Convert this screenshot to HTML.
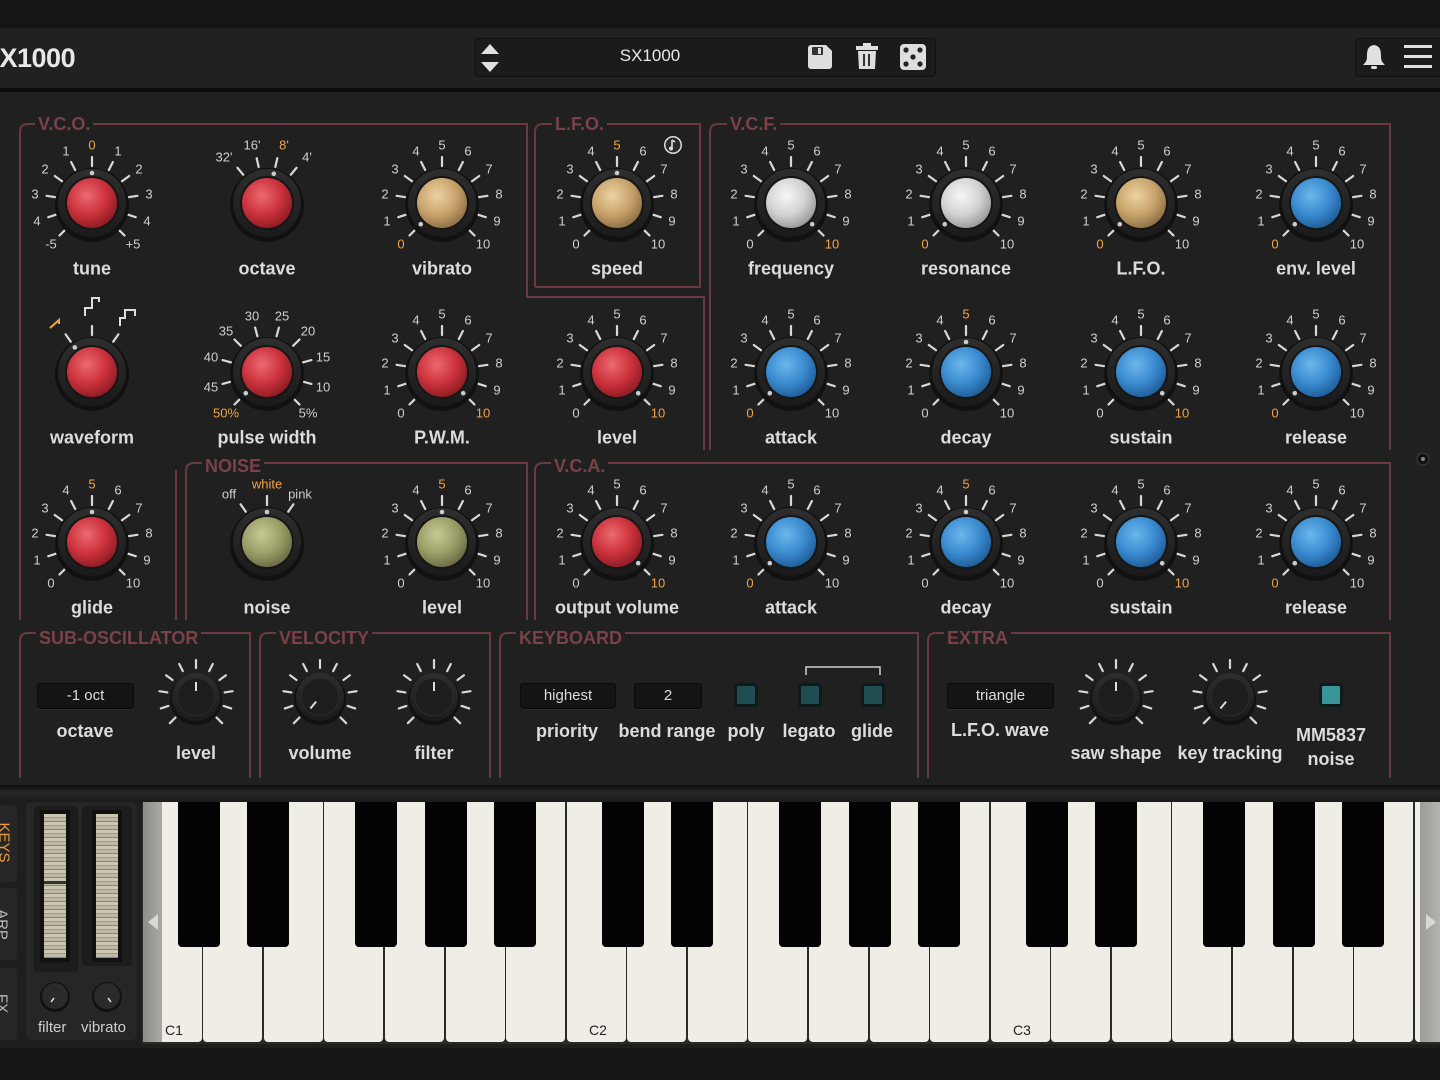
<!DOCTYPE html>
<html><head><meta charset="utf-8">
<style>
*{margin:0;padding:0;box-sizing:border-box}
body{width:1440px;height:1080px;overflow:hidden;background:#151515;font-family:"Liberation Sans",sans-serif;position:relative}
.abs{position:absolute}
#hdr{left:0;top:28px;width:1440px;height:60px;background:#212121}
#panel{left:0;top:92px;width:1440px;height:693px;background:#202020}
.k{position:absolute;width:0;height:0}
.ks{position:absolute;left:-60px;top:-60px;width:120px;height:120px;overflow:visible}
.k b{position:absolute;transform:translate(-50%,-50%);font-size:13px;font-weight:normal;color:#cfcfcf;white-space:nowrap;line-height:1}
.k b.o{color:#f0a548}
.k i{position:absolute;top:66px;left:0;transform:translate(-50%,-50%);font-style:normal;font-weight:bold;font-size:18px;color:#dcdcdc;white-space:nowrap}
.n0{left:-41px;top:41px}.n1{left:-55px;top:18px}.n2{left:-57px;top:-9px}.n3{left:-47px;top:-34px}.n4{left:-26px;top:-52px}.n5{left:0;top:-58px}
.n6{left:26px;top:-52px}.n7{left:47px;top:-34px}.n8{left:57px;top:-9px}.n9{left:55px;top:18px}.n10{left:41px;top:41px}
.p0{left:-41px;top:41px}.p1{left:-56px;top:15px}.p2{left:-56px;top:-15px}.p3{left:-41px;top:-41px}.p4{left:-15px;top:-56px}
.p5{left:15px;top:-56px}.p6{left:41px;top:-41px}.p7{left:56px;top:-15px}.p8{left:56px;top:15px}.p9{left:41px;top:41px}
.title{position:absolute;font-weight:bold;font-size:18px;color:#79414a;background:#202020;padding:0 3px;line-height:20px;letter-spacing:0}
.lbl{position:absolute;transform:translateX(-50%);font-weight:bold;font-size:18px;color:#dcdcdc;white-space:nowrap}
.disp{position:absolute;height:26px;background:#141414;border:1px solid #0a0a0a;border-radius:3px;color:#dcdcdc;font-size:15px;text-align:center;line-height:24px;box-shadow:0 1px 0 #2c2c2c}
.tog{position:absolute;width:24px;height:24px;background:#0f1a1b;border-radius:3px}
.tog::after{content:"";position:absolute;left:3px;top:3px;width:18px;height:18px;background:#1f4d51;border-radius:1px}
.tog.on::after{background:#3a9599}
.wk{position:absolute;top:802px;height:240px;width:58.6px;background:#efede5;border-radius:0 0 4px 4px}
.bk{position:absolute;top:802px;height:145px;width:42px;background:#030303;border-radius:0 0 4px 4px}
.kl{position:absolute;top:1022px;font-size:14px;color:#222}
</style></head><body>
<svg width="0" height="0" style="position:absolute">
<defs>
<radialGradient id="gR" cx="40%" cy="35%" r="70%"><stop offset="0" stop-color="#ec6a70"/><stop offset=".55" stop-color="#cc323c"/><stop offset="1" stop-color="#8a1a22"/></radialGradient>
<radialGradient id="gT" cx="40%" cy="35%" r="70%"><stop offset="0" stop-color="#ecd2a2"/><stop offset=".55" stop-color="#c9a46c"/><stop offset="1" stop-color="#8a6c42"/></radialGradient>
<radialGradient id="gW" cx="40%" cy="35%" r="70%"><stop offset="0" stop-color="#f6f6f6"/><stop offset=".55" stop-color="#d3d3d3"/><stop offset="1" stop-color="#959595"/></radialGradient>
<radialGradient id="gB" cx="40%" cy="35%" r="70%"><stop offset="0" stop-color="#6cb6ec"/><stop offset=".55" stop-color="#3a8bd0"/><stop offset="1" stop-color="#1d5a94"/></radialGradient>
<radialGradient id="gO" cx="40%" cy="35%" r="70%"><stop offset="0" stop-color="#c8ca96"/><stop offset=".55" stop-color="#9c9e68"/><stop offset="1" stop-color="#666840"/></radialGradient>
<linearGradient id="ring" x1="0" y1="0" x2="0" y2="1"><stop offset="0" stop-color="#2e2e2e"/><stop offset="1" stop-color="#1a1a1a"/></linearGradient>
<line id="tk" x1="0" y1="-37" x2="0" y2="-46" stroke="#d8d8d8" stroke-width="2.2" stroke-linecap="round"/>
<g id="t11"><use href="#tk" transform="rotate(-135)"/><use href="#tk" transform="rotate(-108)"/><use href="#tk" transform="rotate(-81)"/><use href="#tk" transform="rotate(-54)"/><use href="#tk" transform="rotate(-27)"/><use href="#tk"/><use href="#tk" transform="rotate(27)"/><use href="#tk" transform="rotate(54)"/><use href="#tk" transform="rotate(81)"/><use href="#tk" transform="rotate(108)"/><use href="#tk" transform="rotate(135)"/></g>
<g id="t10"><use href="#tk" transform="rotate(-135)"/><use href="#tk" transform="rotate(-105)"/><use href="#tk" transform="rotate(-75)"/><use href="#tk" transform="rotate(-45)"/><use href="#tk" transform="rotate(-15)"/><use href="#tk" transform="rotate(15)"/><use href="#tk" transform="rotate(45)"/><use href="#tk" transform="rotate(75)"/><use href="#tk" transform="rotate(105)"/><use href="#tk" transform="rotate(135)"/></g>
<g id="t3"><use href="#tk" transform="rotate(-35)"/><use href="#tk"/><use href="#tk" transform="rotate(35)"/></g>
<g id="t4"><use href="#tk" transform="rotate(-40)"/><use href="#tk" transform="rotate(-13)"/><use href="#tk" transform="rotate(13)"/><use href="#tk" transform="rotate(40)"/></g>
<g id="kb"><circle r="37" cy="2" fill="#111"/><circle r="34" fill="url(#ring)"/><circle r="27" fill="#161616"/></g>
<g id="kR"><use href="#kb"/><circle r="25" fill="url(#gR)"/></g>
<g id="kT"><use href="#kb"/><circle r="25" fill="url(#gT)"/></g>
<g id="kW"><use href="#kb"/><circle r="25" fill="url(#gW)"/></g>
<g id="kB"><use href="#kb"/><circle r="25" fill="url(#gB)"/></g>
<g id="kO"><use href="#kb"/><circle r="25" fill="url(#gO)"/></g>
<line id="st" x1="0" y1="-29" x2="0" y2="-37" stroke="#d8d8d8" stroke-width="2.2" stroke-linecap="round"/>
<g id="sk"><use href="#st" transform="rotate(-135)"/><use href="#st" transform="rotate(-108)"/><use href="#st" transform="rotate(-81)"/><use href="#st" transform="rotate(-54)"/><use href="#st" transform="rotate(-27)"/><use href="#st"/><use href="#st" transform="rotate(27)"/><use href="#st" transform="rotate(54)"/><use href="#st" transform="rotate(81)"/><use href="#st" transform="rotate(108)"/><use href="#st" transform="rotate(135)"/>
<circle r="26" cy="2" fill="#111"/><circle r="24" fill="url(#ring)"/><circle r="19" fill="#1e1e1e" stroke="#2c2c2c"/></g>
</defs></svg>

<div id="hdr" class="abs"></div>
<div class="abs" style="left:0;top:88px;width:1440px;height:4px;background:#0b0b0b"></div>
<div id="panel" class="abs"></div>

<div class="abs" style="left:-18px;top:43px;font-weight:bold;font-size:27px;color:#e8e8e8;letter-spacing:-0.5px">SX1000</div>
<div class="abs" style="left:474px;top:38px;width:462px;height:39px;background:#1b1b1b;border:1px solid #101010;border-radius:4px"></div>
<svg class="abs" style="left:478px;top:40px" width="24" height="36"><path d="M3,14 L12,4 L21,14Z M3,22 L21,22 L12,32Z" fill="#e0e0e0"/></svg>
<div class="abs" style="left:600px;top:46px;width:100px;text-align:center;color:#e8e8e8;font-size:17px">SX1000</div>
<svg class="abs" style="left:806px;top:43px" width="28" height="28"><rect x="2" y="2" width="24" height="24" rx="3" fill="#dedede"/><path d="M20,2 L26,8 L26,2Z" fill="#1b1b1b"/><rect x="6" y="4" width="11" height="8" rx="1" fill="#333"/><rect x="12" y="5" width="3" height="6" fill="#ddd"/></svg>
<svg class="abs" style="left:854px;top:43px" width="26" height="28"><rect x="2" y="3" width="22" height="4" fill="#dedede"/><rect x="9" y="0" width="8" height="4" fill="#dedede"/><path d="M4,8 H22 L21,26 H5Z" fill="#dedede"/><rect x="9" y="11" width="2" height="12" fill="#333"/><rect x="14" y="11" width="2" height="12" fill="#333"/></svg>
<svg class="abs" style="left:899px;top:43px" width="28" height="28"><rect x="1" y="1" width="26" height="26" rx="4" fill="#dedede"/><circle cx="7" cy="7" r="2.6" fill="#222"/><circle cx="21" cy="7" r="2.6" fill="#222"/><circle cx="14" cy="14" r="2.6" fill="#222"/><circle cx="7" cy="21" r="2.6" fill="#222"/><circle cx="21" cy="21" r="2.6" fill="#222"/></svg>
<div class="abs" style="left:1355px;top:38px;width:100px;height:39px;background:#1b1b1b;border:1px solid #101010;border-radius:4px"></div>
<svg class="abs" style="left:1361px;top:43px" width="26" height="28"><path d="M13,2 C6,3 6,9 6,14 C6,18 4,20 2,22 H24 C22,20 20,18 20,14 C20,9 20,3 13,2Z" fill="#e0e0e0"/><rect x="10" y="23" width="6" height="3" rx="1.5" fill="#e0e0e0"/></svg>
<svg class="abs" style="left:1403px;top:44px" width="30" height="26"><rect x="1" y="1" width="28" height="3" fill="#e0e0e0"/><rect x="1" y="11" width="28" height="3" fill="#e0e0e0"/><rect x="1" y="21" width="28" height="3" fill="#e0e0e0"/></svg>

<svg class="abs" style="left:0;top:0" width="1440" height="1080" fill="none" stroke="#6a3a40" stroke-width="2">
<path d="M20,620 V132 Q20,124 28,124 H527 V297 H704 V450"/>
<path d="M527,620 V463 H194 Q186,463 186,471 V620"/>
<path d="M176,470 V620"/>
<path d="M535,287 V132 Q535,124 543,124 H700 V287 H535"/>
<path d="M710,450 V132 Q710,124 718,124 H1390 V450"/>
<path d="M535,620 V471 Q535,463 543,463 H1390 V620"/>
<path d="M20,778 V641 Q20,633 28,633 H250 V778"/>
<path d="M260,778 V641 Q260,633 268,633 H490 V778"/>
<path d="M500,778 V641 Q500,633 508,633 H918 V778"/>
<path d="M928,778 V641 Q928,633 936,633 H1390 V778"/>
<path d="M806,675 V667 H880 V675" stroke="#cfcfcf" stroke-width="1.5"/>
</svg>
<div class="title" style="left:35px;top:114px">V.C.O.</div>
<div class="title" style="left:552px;top:114px">L.F.O.</div>
<div class="title" style="left:727px;top:114px">V.C.F.</div>
<div class="title" style="left:202px;top:456px">NOISE</div>
<div class="title" style="left:551px;top:456px">V.C.A.</div>
<div class="title" style="left:36px;top:628px">SUB-OSCILLATOR</div>
<div class="title" style="left:276px;top:628px">VELOCITY</div>
<div class="title" style="left:516px;top:628px">KEYBOARD</div>
<div class="title" style="left:944px;top:628px">EXTRA</div>
<svg class="abs" style="left:1416px;top:452px" width="14" height="14"><circle cx="7" cy="7" r="6" fill="#111" stroke="#444"/><circle cx="7" cy="7" r="2" fill="#888"/></svg>
<svg class="abs" style="left:663px;top:135px" width="20" height="20"><circle cx="10" cy="10" r="9" fill="#ddd"/><circle cx="10" cy="10" r="7.5" fill="#2a2a2a"/><path d="M9,5 V13" stroke="#ddd" stroke-width="1.6"/><circle cx="8" cy="13.5" r="2" fill="#ddd"/><path d="M9,5 L12,7" stroke="#ddd" stroke-width="1.6"/></svg>

<div class="k" style="left:92px;top:203px"><svg class="ks" viewBox="-60 -60 120 120"><use href="#t11"/><use href="#kR"/><circle cx="0" cy="-30" r="2.3" fill="#ccc"/></svg><b class="n0">-5</b><b class="n1">4</b><b class="n2">3</b><b class="n3">2</b><b class="n4">1</b><b class="n5 o">0</b><b class="n6">1</b><b class="n7">2</b><b class="n8">3</b><b class="n9">4</b><b class="n10">+5</b><i>tune</i></div>
<div class="k" style="left:267px;top:203px"><svg class="ks" viewBox="-60 -60 120 120"><use href="#t4"/><use href="#kR"/><circle cx="0" cy="-30" r="2.3" fill="#ccc" transform="rotate(13)"/></svg><b style="left:-43px;top:-46px">32'</b><b style="left:-15px;top:-58px">16'</b><b class="o" style="left:17px;top:-58px">8'</b><b style="left:40px;top:-46px">4'</b><i>octave</i></div>
<div class="k" style="left:442px;top:203px"><svg class="ks" viewBox="-60 -60 120 120"><use href="#t11"/><use href="#kT"/><circle cx="0" cy="-30" r="2.3" fill="#ccc" transform="rotate(-135)"/></svg><b class="n0 o">0</b><b class="n1">1</b><b class="n2">2</b><b class="n3">3</b><b class="n4">4</b><b class="n5">5</b><b class="n6">6</b><b class="n7">7</b><b class="n8">8</b><b class="n9">9</b><b class="n10">10</b><i>vibrato</i></div>
<div class="k" style="left:617px;top:203px"><svg class="ks" viewBox="-60 -60 120 120"><use href="#t11"/><use href="#kT"/><circle cx="0" cy="-30" r="2.3" fill="#ccc"/></svg><b class="n0">0</b><b class="n1">1</b><b class="n2">2</b><b class="n3">3</b><b class="n4">4</b><b class="n5 o">5</b><b class="n6">6</b><b class="n7">7</b><b class="n8">8</b><b class="n9">9</b><b class="n10">10</b><i>speed</i></div>
<div class="k" style="left:791px;top:203px"><svg class="ks" viewBox="-60 -60 120 120"><use href="#t11"/><use href="#kW"/><circle cx="0" cy="-30" r="2.3" fill="#ccc" transform="rotate(135)"/></svg><b class="n0">0</b><b class="n1">1</b><b class="n2">2</b><b class="n3">3</b><b class="n4">4</b><b class="n5">5</b><b class="n6">6</b><b class="n7">7</b><b class="n8">8</b><b class="n9">9</b><b class="n10 o">10</b><i>frequency</i></div>
<div class="k" style="left:966px;top:203px"><svg class="ks" viewBox="-60 -60 120 120"><use href="#t11"/><use href="#kW"/><circle cx="0" cy="-30" r="2.3" fill="#ccc" transform="rotate(-135)"/></svg><b class="n0 o">0</b><b class="n1">1</b><b class="n2">2</b><b class="n3">3</b><b class="n4">4</b><b class="n5">5</b><b class="n6">6</b><b class="n7">7</b><b class="n8">8</b><b class="n9">9</b><b class="n10">10</b><i>resonance</i></div>
<div class="k" style="left:1141px;top:203px"><svg class="ks" viewBox="-60 -60 120 120"><use href="#t11"/><use href="#kT"/><circle cx="0" cy="-30" r="2.3" fill="#ccc" transform="rotate(-135)"/></svg><b class="n0 o">0</b><b class="n1">1</b><b class="n2">2</b><b class="n3">3</b><b class="n4">4</b><b class="n5">5</b><b class="n6">6</b><b class="n7">7</b><b class="n8">8</b><b class="n9">9</b><b class="n10">10</b><i>L.F.O.</i></div>
<div class="k" style="left:1316px;top:203px"><svg class="ks" viewBox="-60 -60 120 120"><use href="#t11"/><use href="#kB"/><circle cx="0" cy="-30" r="2.3" fill="#ccc" transform="rotate(-135)"/></svg><b class="n0 o">0</b><b class="n1">1</b><b class="n2">2</b><b class="n3">3</b><b class="n4">4</b><b class="n5">5</b><b class="n6">6</b><b class="n7">7</b><b class="n8">8</b><b class="n9">9</b><b class="n10">10</b><i>env. level</i></div>

<div class="k" style="left:92px;top:372px"><svg class="ks" viewBox="-60 -60 120 120"><use href="#t3"/><use href="#kR"/><circle cx="0" cy="-30" r="2.3" fill="#ccc" transform="rotate(-35)"/>
<path d="M-44,-44 L-35,-52 V-48" stroke="#f0a548" stroke-width="2" fill="none" transform="translate(2,0)"/>
<path d="M-7,-56 V-64 H0 V-74 H7 V-70" stroke="#ddd" stroke-width="2" fill="none"/>
<path d="M28,-46 V-54 H33 V-62 H43 V-56" stroke="#ddd" stroke-width="2" fill="none"/></svg><i>waveform</i></div>
<div class="k" style="left:267px;top:372px"><svg class="ks" viewBox="-60 -60 120 120"><use href="#t10"/><use href="#kR"/><circle cx="0" cy="-30" r="2.3" fill="#ccc" transform="rotate(-135)"/></svg><b class="p0 o">50%</b><b class="p1">45</b><b class="p2">40</b><b class="p3">35</b><b class="p4">30</b><b class="p5">25</b><b class="p6">20</b><b class="p7">15</b><b class="p8">10</b><b class="p9">5%</b><i>pulse width</i></div>
<div class="k" style="left:442px;top:372px"><svg class="ks" viewBox="-60 -60 120 120"><use href="#t11"/><use href="#kR"/><circle cx="0" cy="-30" r="2.3" fill="#ccc" transform="rotate(135)"/></svg><b class="n0">0</b><b class="n1">1</b><b class="n2">2</b><b class="n3">3</b><b class="n4">4</b><b class="n5">5</b><b class="n6">6</b><b class="n7">7</b><b class="n8">8</b><b class="n9">9</b><b class="n10 o">10</b><i>P.W.M.</i></div>
<div class="k" style="left:617px;top:372px"><svg class="ks" viewBox="-60 -60 120 120"><use href="#t11"/><use href="#kR"/><circle cx="0" cy="-30" r="2.3" fill="#ccc" transform="rotate(135)"/></svg><b class="n0">0</b><b class="n1">1</b><b class="n2">2</b><b class="n3">3</b><b class="n4">4</b><b class="n5">5</b><b class="n6">6</b><b class="n7">7</b><b class="n8">8</b><b class="n9">9</b><b class="n10 o">10</b><i>level</i></div>
<div class="k" style="left:791px;top:372px"><svg class="ks" viewBox="-60 -60 120 120"><use href="#t11"/><use href="#kB"/><circle cx="0" cy="-30" r="2.3" fill="#ccc" transform="rotate(-135)"/></svg><b class="n0 o">0</b><b class="n1">1</b><b class="n2">2</b><b class="n3">3</b><b class="n4">4</b><b class="n5">5</b><b class="n6">6</b><b class="n7">7</b><b class="n8">8</b><b class="n9">9</b><b class="n10">10</b><i>attack</i></div>
<div class="k" style="left:966px;top:372px"><svg class="ks" viewBox="-60 -60 120 120"><use href="#t11"/><use href="#kB"/><circle cx="0" cy="-30" r="2.3" fill="#ccc"/></svg><b class="n0">0</b><b class="n1">1</b><b class="n2">2</b><b class="n3">3</b><b class="n4">4</b><b class="n5 o">5</b><b class="n6">6</b><b class="n7">7</b><b class="n8">8</b><b class="n9">9</b><b class="n10">10</b><i>decay</i></div>
<div class="k" style="left:1141px;top:372px"><svg class="ks" viewBox="-60 -60 120 120"><use href="#t11"/><use href="#kB"/><circle cx="0" cy="-30" r="2.3" fill="#ccc" transform="rotate(135)"/></svg><b class="n0">0</b><b class="n1">1</b><b class="n2">2</b><b class="n3">3</b><b class="n4">4</b><b class="n5">5</b><b class="n6">6</b><b class="n7">7</b><b class="n8">8</b><b class="n9">9</b><b class="n10 o">10</b><i>sustain</i></div>
<div class="k" style="left:1316px;top:372px"><svg class="ks" viewBox="-60 -60 120 120"><use href="#t11"/><use href="#kB"/><circle cx="0" cy="-30" r="2.3" fill="#ccc" transform="rotate(-135)"/></svg><b class="n0 o">0</b><b class="n1">1</b><b class="n2">2</b><b class="n3">3</b><b class="n4">4</b><b class="n5">5</b><b class="n6">6</b><b class="n7">7</b><b class="n8">8</b><b class="n9">9</b><b class="n10">10</b><i>release</i></div>

<div class="k" style="left:92px;top:542px"><svg class="ks" viewBox="-60 -60 120 120"><use href="#t11"/><use href="#kR"/><circle cx="0" cy="-30" r="2.3" fill="#ccc"/></svg><b class="n0">0</b><b class="n1">1</b><b class="n2">2</b><b class="n3">3</b><b class="n4">4</b><b class="n5 o">5</b><b class="n6">6</b><b class="n7">7</b><b class="n8">8</b><b class="n9">9</b><b class="n10">10</b><i>glide</i></div>
<div class="k" style="left:267px;top:542px"><svg class="ks" viewBox="-60 -60 120 120"><use href="#t3"/><use href="#kO"/><circle cx="0" cy="-30" r="2.3" fill="#ccc"/></svg><b style="left:-38px;top:-48px">off</b><b class="o" style="left:0;top:-58px">white</b><b style="left:33px;top:-48px">pink</b><i>noise</i></div>
<div class="k" style="left:442px;top:542px"><svg class="ks" viewBox="-60 -60 120 120"><use href="#t11"/><use href="#kO"/><circle cx="0" cy="-30" r="2.3" fill="#ccc"/></svg><b class="n0">0</b><b class="n1">1</b><b class="n2">2</b><b class="n3">3</b><b class="n4">4</b><b class="n5 o">5</b><b class="n6">6</b><b class="n7">7</b><b class="n8">8</b><b class="n9">9</b><b class="n10">10</b><i>level</i></div>
<div class="k" style="left:617px;top:542px"><svg class="ks" viewBox="-60 -60 120 120"><use href="#t11"/><use href="#kR"/><circle cx="0" cy="-30" r="2.3" fill="#ccc" transform="rotate(135)"/></svg><b class="n0">0</b><b class="n1">1</b><b class="n2">2</b><b class="n3">3</b><b class="n4">4</b><b class="n5">5</b><b class="n6">6</b><b class="n7">7</b><b class="n8">8</b><b class="n9">9</b><b class="n10 o">10</b><i>output volume</i></div>
<div class="k" style="left:791px;top:542px"><svg class="ks" viewBox="-60 -60 120 120"><use href="#t11"/><use href="#kB"/><circle cx="0" cy="-30" r="2.3" fill="#ccc" transform="rotate(-135)"/></svg><b class="n0 o">0</b><b class="n1">1</b><b class="n2">2</b><b class="n3">3</b><b class="n4">4</b><b class="n5">5</b><b class="n6">6</b><b class="n7">7</b><b class="n8">8</b><b class="n9">9</b><b class="n10">10</b><i>attack</i></div>
<div class="k" style="left:966px;top:542px"><svg class="ks" viewBox="-60 -60 120 120"><use href="#t11"/><use href="#kB"/><circle cx="0" cy="-30" r="2.3" fill="#ccc"/></svg><b class="n0">0</b><b class="n1">1</b><b class="n2">2</b><b class="n3">3</b><b class="n4">4</b><b class="n5 o">5</b><b class="n6">6</b><b class="n7">7</b><b class="n8">8</b><b class="n9">9</b><b class="n10">10</b><i>decay</i></div>
<div class="k" style="left:1141px;top:542px"><svg class="ks" viewBox="-60 -60 120 120"><use href="#t11"/><use href="#kB"/><circle cx="0" cy="-30" r="2.3" fill="#ccc" transform="rotate(135)"/></svg><b class="n0">0</b><b class="n1">1</b><b class="n2">2</b><b class="n3">3</b><b class="n4">4</b><b class="n5">5</b><b class="n6">6</b><b class="n7">7</b><b class="n8">8</b><b class="n9">9</b><b class="n10 o">10</b><i>sustain</i></div>
<div class="k" style="left:1316px;top:542px"><svg class="ks" viewBox="-60 -60 120 120"><use href="#t11"/><use href="#kB"/><circle cx="0" cy="-30" r="2.3" fill="#ccc" transform="rotate(-135)"/></svg><b class="n0 o">0</b><b class="n1">1</b><b class="n2">2</b><b class="n3">3</b><b class="n4">4</b><b class="n5">5</b><b class="n6">6</b><b class="n7">7</b><b class="n8">8</b><b class="n9">9</b><b class="n10">10</b><i>release</i></div>

<div class="disp" style="left:37px;top:683px;width:97px">-1 oct</div>
<div class="lbl" style="left:85px;top:721px">octave</div>
<svg class="abs" style="left:0;top:0;overflow:visible" width="1440" height="1080">
<g transform="translate(196,697)"><use href="#sk"/><line x1="0" y1="-6" x2="0" y2="-15" stroke="#ddd" stroke-width="2"/></g>
<g transform="translate(320,697)"><use href="#sk"/><line x1="0" y1="-6" x2="0" y2="-15" stroke="#ddd" stroke-width="2" transform="rotate(-140)"/></g>
<g transform="translate(434,697)"><use href="#sk"/><line x1="0" y1="-6" x2="0" y2="-15" stroke="#ddd" stroke-width="2"/></g>
<g transform="translate(1116,697)"><use href="#sk"/><line x1="0" y1="-6" x2="0" y2="-15" stroke="#ddd" stroke-width="2"/></g>
<g transform="translate(1230,697)"><use href="#sk"/><line x1="0" y1="-6" x2="0" y2="-15" stroke="#ddd" stroke-width="2" transform="rotate(-140)"/></g>
</svg>
<div class="lbl" style="left:196px;top:743px">level</div>
<div class="lbl" style="left:320px;top:743px">volume</div>
<div class="lbl" style="left:434px;top:743px">filter</div>
<div class="disp" style="left:520px;top:683px;width:96px">highest</div>
<div class="disp" style="left:634px;top:683px;width:68px">2</div>
<div class="tog" style="left:734px;top:683px"></div>
<div class="tog" style="left:798px;top:683px"></div>
<div class="tog" style="left:861px;top:683px"></div>
<div class="lbl" style="left:567px;top:721px">priority</div>
<div class="lbl" style="left:667px;top:721px">bend range</div>
<div class="lbl" style="left:746px;top:721px">poly</div>
<div class="lbl" style="left:809px;top:721px">legato</div>
<div class="lbl" style="left:872px;top:721px">glide</div>
<div class="disp" style="left:947px;top:683px;width:107px">triangle</div>
<div class="lbl" style="left:1000px;top:720px">L.F.O. wave</div>
<div class="lbl" style="left:1116px;top:743px">saw shape</div>
<div class="lbl" style="left:1230px;top:743px">key tracking</div>
<div class="tog on" style="left:1319px;top:683px"></div>
<div class="lbl" style="left:1331px;top:725px">MM5837</div>
<div class="lbl" style="left:1331px;top:749px">noise</div>

<div class="abs" style="left:0;top:785px;width:1440px;height:17px;background:linear-gradient(#0e0e0e,#262626 40%,#1c1c1c)"></div>
<div class="abs" style="left:0;top:802px;width:1440px;height:246px;background:#1e1e1e"></div>
<div class="abs" style="left:142px;top:802px;width:1298px;height:242px;background:#2a2a2a"></div>
<div class="wk" style="left:143px"></div><div class="wk" style="left:203px"></div><div class="wk" style="left:264px"></div><div class="wk" style="left:324px"></div><div class="wk" style="left:385px"></div><div class="wk" style="left:446px"></div><div class="wk" style="left:506px"></div>
<div class="wk" style="left:567px"></div><div class="wk" style="left:627px"></div><div class="wk" style="left:688px"></div><div class="wk" style="left:748px"></div><div class="wk" style="left:809px"></div><div class="wk" style="left:870px"></div><div class="wk" style="left:930px"></div>
<div class="wk" style="left:991px"></div><div class="wk" style="left:1051px"></div><div class="wk" style="left:1112px"></div><div class="wk" style="left:1172px"></div><div class="wk" style="left:1233px"></div><div class="wk" style="left:1294px"></div><div class="wk" style="left:1354px"></div>
<div class="wk" style="left:1415px"></div>
<div class="bk" style="left:178px"></div><div class="bk" style="left:247px"></div><div class="bk" style="left:355px"></div><div class="bk" style="left:425px"></div><div class="bk" style="left:494px"></div>
<div class="bk" style="left:602px"></div><div class="bk" style="left:671px"></div><div class="bk" style="left:779px"></div><div class="bk" style="left:849px"></div><div class="bk" style="left:918px"></div>
<div class="bk" style="left:1026px"></div><div class="bk" style="left:1095px"></div><div class="bk" style="left:1203px"></div><div class="bk" style="left:1273px"></div><div class="bk" style="left:1342px"></div>
<div class="abs" style="left:143px;top:802px;width:19px;height:240px;background:linear-gradient(90deg,#8e8d89,#aaa9a4)"></div>
<svg class="abs" style="left:146px;top:912px" width="14" height="20"><path d="M12,2 L2,10 L12,18Z" fill="#d8d8d4"/></svg>
<div class="abs" style="left:1420px;top:802px;width:20px;height:240px;background:linear-gradient(90deg,#9c9b97,#b5b4ae)"></div>
<svg class="abs" style="left:1424px;top:912px" width="14" height="20"><path d="M2,2 L12,10 L2,18Z" fill="#d8d8d4"/></svg>
<div class="kl" style="left:165px">C1</div>
<div class="kl" style="left:589px">C2</div>
<div class="kl" style="left:1013px">C3</div>

<div class="abs" style="left:-8px;top:805px;width:25px;height:77px;background:#262626;border-radius:4px"></div>
<div class="abs" style="left:-8px;top:888px;width:25px;height:72px;background:#262626;border-radius:4px"></div>
<div class="abs" style="left:-8px;top:968px;width:25px;height:72px;background:#262626;border-radius:4px"></div>
<div class="abs" style="left:-16px;top:834px;width:40px;text-align:center;transform:rotate(90deg);color:#e89a40;font-size:15px">KEYS</div>
<div class="abs" style="left:-18px;top:916px;width:40px;text-align:center;transform:rotate(90deg);color:#bbb;font-size:15px">ARP</div>
<div class="abs" style="left:-18px;top:995px;width:40px;text-align:center;transform:rotate(90deg);color:#bbb;font-size:15px">FX</div>
<div class="abs" style="left:26px;top:802px;width:111px;height:238px;background:#262626;border-radius:6px"></div>
<div class="abs" style="left:34px;top:806px;width:44px;height:166px;background:#1c1c1c;border-radius:4px"></div>
<div class="abs" style="left:82px;top:806px;width:50px;height:160px;background:#1c1c1c;border-radius:4px"></div>
<div class="abs" style="left:40px;top:810px;width:30px;height:152px;background:#111"></div>
<div class="abs" style="left:44px;top:814px;width:22px;height:144px;background:repeating-linear-gradient(#cac6b2 0 3px,#9f9b88 3px 4px,#bdb9a5 4px 7px,#88857a 7px 8px)"></div>
<div class="abs" style="left:92px;top:810px;width:30px;height:152px;background:#111"></div>
<div class="abs" style="left:96px;top:814px;width:22px;height:144px;background:repeating-linear-gradient(#cac6b2 0 3px,#9f9b88 3px 4px,#bdb9a5 4px 7px,#88857a 7px 8px)"></div>
<div class="abs" style="left:44px;top:881px;width:22px;height:3px;background:#333"></div>
<svg class="abs" style="left:36px;top:978px" width="100" height="40">
<circle cx="19" cy="19" r="15" fill="#111"/><circle cx="19" cy="18" r="13" fill="#2a2a2a"/><line x1="15" y1="24" x2="18" y2="20" stroke="#ddd" stroke-width="1.5"/>
<circle cx="71" cy="19" r="15" fill="#111"/><circle cx="71" cy="18" r="13" fill="#2a2a2a"/><line x1="75" y1="24" x2="72" y2="20" stroke="#ddd" stroke-width="1.5"/>
</svg>
<div class="abs" style="left:38px;top:1019px;color:#cfcfcf;font-size:15px">filter</div>
<div class="abs" style="left:81px;top:1019px;color:#cfcfcf;font-size:15px">vibrato</div>
<div class="abs" style="left:0;top:1048px;width:1440px;height:32px;background:#151515"></div>
</body></html>
